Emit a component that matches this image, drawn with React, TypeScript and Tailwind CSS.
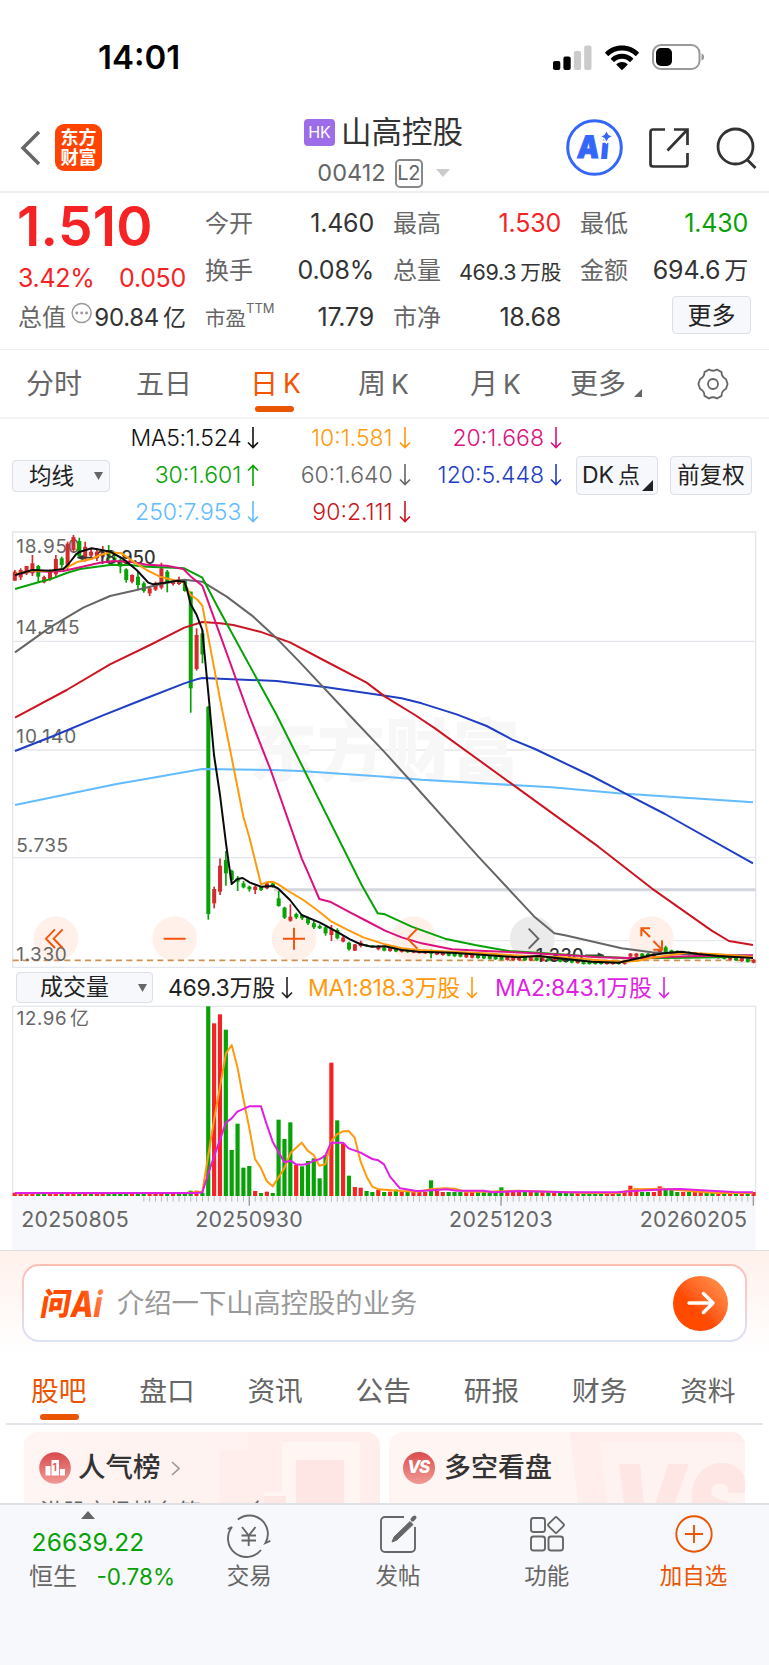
import React from 'react';

const RED = '#d22a2d';
const GREEN = '#06a206';

// chart space is 3 units per css pixel, one bar every STEP units
const X0 = 44;
const STEP = 17.59;

const barX = (i: number) => X0 + i * STEP;

type Candle = [string, number, number, number, number];

// colour, high, body top, body bottom, low
const candles: Candle[] = [
  ['r', 465, 470, 497, 497], ['r', 460, 465, 487, 495], ['r', 453, 453, 475, 480], ['r', 420, 445, 475, 483],
  ['g', 450, 453, 485, 502], ['r', 482, 486, 502, 505], ['r', 463, 470, 493, 497], ['r', 420, 432, 478, 488],
  ['g', 425, 430, 450, 460], ['r', 380, 386, 455, 465], ['r', 360, 366, 405, 412], ['g', 368, 378, 425, 430],
  ['r', 380, 395, 430, 440], ['r', 400, 410, 422, 432], ['r', 400, 410, 430, 438], ['r', 393, 410, 425, 430],
  ['g', 390, 405, 430, 440], ['g', 420, 428, 435, 445], ['g', 430, 435, 455, 475], ['g', 460, 463, 495, 503],
  ['r', 478, 480, 500, 505], ['g', 470, 485, 510, 525], ['g', 500, 505, 528, 533], ['r', 515, 520, 535, 543],
  ['r', 500, 505, 524, 528], ['r', 443, 460, 518, 523], ['g', 465, 470, 505, 532], ['r', 493, 497, 507, 512],
  ['r', 485, 493, 507, 510], ['g', 495, 497, 528, 530], ['g', 530, 530, 820, 893], ['r', 640, 660, 762, 767],
  ['g', 645, 655, 718, 745], ['g', 873, 875, 1497, 1514], ['r', 1415, 1422, 1465, 1480], ['r', 1330, 1352, 1430, 1440],
  ['g', 1308, 1335, 1375, 1412], ['g', 1364, 1368, 1395, 1400], ['g', 1383, 1390, 1400, 1428], ['g', 1398, 1405, 1417, 1420],
  ['g', 1412, 1415, 1423, 1430], ['r', 1412, 1415, 1425, 1437], ['g', 1415, 1415, 1425, 1428], ['r', 1403, 1405, 1420, 1423],
  ['g', 1403, 1405, 1415, 1418], ['g', 1428, 1450, 1473, 1475], ['g', 1475, 1478, 1508, 1512], ['r', 1468, 1505, 1517, 1520],
  ['g', 1493, 1497, 1507, 1512], ['g', 1498, 1500, 1510, 1515], ['g', 1505, 1510, 1525, 1530], ['g', 1518, 1525, 1537, 1542],
  ['g', 1528, 1533, 1540, 1542], ['g', 1533, 1537, 1555, 1562], ['r', 1530, 1542, 1560, 1578], ['g', 1540, 1545, 1570, 1573],
  ['r', 1560, 1568, 1580, 1582], ['g', 1580, 1583, 1603, 1607], ['r', 1587, 1588, 1607, 1608], ['r', 1577, 1583, 1593, 1597],
  ['g', 1588, 1590, 1594, 1596], ['g', 1590, 1591, 1595, 1597], ['r', 1590, 1593, 1603, 1606],
];

const lateColors = 'grgrgrrrgrrgggrrgggggrrrgrgrgrgggrggggrrgrrrggrrgggrgrrggrgrgrgr';

// closing level of the flat tail, sampled every 7 bars
const tailLevels = [1602, 1610, 1622, 1630, 1632, 1642, 1620, 1610, 1622, 1638];

lateColors.split('').forEach((c, k) => {
  const a = tailLevels[Math.floor(k / 7)];
  const b = tailLevels[Math.min(Math.floor(k / 7) + 1, 9)];
  let y = a + ((b - a) * (k % 7)) / 7;
  if (k >= 34 && k <= 41) y = 1642;
  if (k >= 42 && k <= 46) y = 1620;
  if (k === 47 || k === 48) y = 1608;
  if (k === 8) {
    candles.push([c, 1604, 1608, 1616, 1630]);
  } else if (k === 48) {
    candles.push([c, 1592, 1597, 1612, 1618]);
  } else {
    candles.push([c, y - 6, y - 4, y + 5, y + 7]);
  }
});

const priceLines = [
  { color: '#62bcff', points: '45,1170 350,1107 450,1090 607,1062 820,1065 900,1068 1155,1085 1265,1094 1655,1117 1855,1135 2259,1162' },
  { color: '#203ec4', points: '45,1008 160,963 307,902 425,855 553,805 590,793 607,789 830,798 980,817 1155,842 1205,850 1265,865 1370,898 1460,933 1535,973 1605,1002 1775,1083 1875,1135 1995,1197 2259,1345' },
  { color: '#cc1523', points: '45,908 200,825 330,748 450,690 553,638 607,621 660,625 700,630 780,650 870,682 970,735 1100,803 1155,845 1245,900 1305,940 1530,1103 1795,1295 1955,1420 2135,1547 2187,1578 2259,1590' },
  { color: '#666666', points: '45,712 150,637 250,578 330,543 400,527 450,515 500,503 553,494 607,500 680,545 760,605 825,665 900,742 1048,900 1155,1013 1205,1068 1435,1325 1605,1507 1663,1555 1695,1561 1865,1600 1955,1612 2055,1617 2259,1622' },
  { color: GREEN, points: '45,522 110,503 150,493 200,474 240,462 330,450 390,450 440,455 520,458 553,460 607,488 655,580 830,900 1085,1410 1133,1495 1155,1498 1235,1535 1335,1571 1425,1590 1525,1608 1635,1615 1755,1623 1895,1630 2055,1628 2259,1625' },
  { color: '#dd1080', points: '45,480 97,468 150,470 190,468 240,457 300,443 340,438 390,440 440,449 500,452 550,462 575,487 607,512 747,900 812,1065 905,1330 925,1375 958,1452 990,1460 1050,1492 1100,1518 1155,1547 1205,1567 1265,1585 1355,1603 1455,1608 1575,1613 1695,1620 1795,1627 1915,1630 2005,1625 2105,1623 2259,1621' },
  { color: '#ff9a0d', points: '45,477 97,468 150,468 190,462 235,440 275,432 300,420 330,412 365,415 400,440 440,465 480,485 520,495 553,502 572,540 590,552 607,572 662,862 730,1205 748,1267 783,1408 800,1402 818,1400 835,1408 865,1428 910,1455 955,1488 995,1520 1040,1543 1090,1567 1155,1588 1205,1600 1255,1605 1355,1610 1455,1615 1575,1623 1695,1627 1815,1637 1875,1640 1915,1637 1955,1628 2015,1620 2055,1613 2155,1618 2259,1625' },
  { color: '#0a0a0a', points: '45,480 97,465 150,467 190,462 203,450 215,435 228,418 240,410 275,400 300,404 330,410 370,432 410,465 445,503 460,508 490,504 530,497 553,500 560,520 572,568 590,600 607,645 614,720 627,855 642,1020 660,1140 678,1285 695,1407 712,1392 728,1389 750,1403 783,1415 820,1413 835,1421 870,1455 905,1500 960,1523 1010,1550 1050,1573 1080,1587 1115,1595 1155,1594 1205,1605 1255,1610 1355,1613 1455,1620 1555,1627 1615,1623 1705,1633 1775,1640 1855,1643 1915,1630 1955,1620 2005,1613 2045,1610 2095,1617 2155,1623 2259,1629' },
];

const earlyVolColors = 'rrrrggrrgrrgrgrrggggrggrrrgrgg';

const volumeBars: [string, number][] = [
  ...earlyVolColors.split('').map((c): [string, number] => [c, 593]),
  ['g', 587], ['r', 587], ['g', 593], ['g', 34], ['r', 85], ['r', 58], ['g', 104], ['g', 465], ['g', 386], ['g', 518],
  ['g', 513], ['r', 588], ['g', 594], ['r', 590], ['g', 594], ['g', 374], ['g', 432], ['g', 382], ['r', 510], ['g', 514],
  ['g', 498], ['g', 490], ['g', 550], ['g', 480], ['r', 203], ['g', 376], ['r', 445], ['g', 542], ['r', 576], ['r', 578],
  ['g', 588], ['g', 591], ['r', 585],
  ...lateColors.split('').map((c, k): [string, number] => {
    const peaks: Record<number, number> = { 1: 590, 2: 584, 8: 556, 9: 587, 20: 577, 41: 589, 42: 572, 43: 580, 47: 574, 48: 580, 49: 584 };
    return [c, peaks[k] ?? (k < 32 || k > 43 ? 591 : 593)];
  }),
];

const volumeLines = [
  { color: '#ff9a0d', points: '45,595 553,594 607,590 625,480 642,375 660,275 678,175 695,150 712,215 728,300 748,400 765,492 783,520 800,558 818,574 853,520 872,473 905,443 923,467 941,480 958,512 976,508 993,440 1011,418 1029,409 1046,408 1064,428 1082,500 1100,545 1117,575 1135,583 1205,588 1255,590 1295,582 1335,580 1365,581 1395,590 1455,590 1555,587 1655,590 1755,594 1855,594 1905,583 1985,581 2035,585 2095,590 2155,594 2259,594' },
  { color: '#e01fe4', points: '45,594 590,594 607,592 625,535 642,485 678,383 695,370 712,350 748,334 783,334 800,388 818,440 853,502 872,497 888,508 905,509 923,507 941,497 958,493 976,482 993,443 1029,443 1046,460 1082,473 1117,492 1135,496 1152,508 1170,545 1200,580 1250,588 1275,587 1340,583 1370,587 1450,587 1480,592 1560,588 1700,592 1850,592 1900,588 2000,583 2040,582 2130,587 2200,591 2259,592' },
];

const averages = [
  { text: 'MA5:1.524', color: 'text-[#111] tracking-[-0.3px]', up: false },
  { text: '10:1.581', color: 'text-[#ff9a0d]', up: false },
  { text: '20:1.668', color: 'text-[#dd1080]', up: false },
  { text: '30:1.601', color: 'text-[#06a206]', up: true },
  { text: '60:1.640', color: 'text-[#666]', up: false },
  { text: '120:5.448', color: 'text-[#203ec4]', up: false },
  { text: '250:7.953', color: 'text-[#62bcff]', up: false },
  { text: '90:2.111', color: 'text-[#cc1523]', up: false },
];

const Arrow = ({ up = false }: { up?: boolean }) => (
  <svg viewBox="0 0 12 22" className={`w-3 h-[22px] flex-shrink-0 ${up ? 'rotate-180' : ''}`} fill="none" stroke="currentColor" strokeWidth="1.6">
    <path d="M6 0v20.5M1 15.5l5 5 5-5" />
  </svg>
);

const StatusBar = () => (
  <div className="h-[98px] flex-shrink-0 flex items-start justify-between pl-[98px] pr-[64px] pt-[40px]">
    <span className="text-[33px] leading-[34px] font-semibold text-black">14:01</span>
    <div className="flex items-center gap-[14px] pt-1">
      <svg viewBox="0 0 39 25" className="w-[39px] h-[25px]">
        <rect x="0" y="16" width="7.3" height="9" rx="2" fill="#000" />
        <rect x="10.4" y="11.5" width="7.3" height="13.5" rx="2" fill="#000" />
        <rect x="20.8" y="6" width="7.3" height="19" rx="2" fill="#cbcbcb" />
        <rect x="31.2" y="0.5" width="7.3" height="24.5" rx="2" fill="#cbcbcb" />
      </svg>
      <svg viewBox="0 0 34 25" className="w-[34px] h-[25px] -ml-px mr-[-1px]">
        <path d="M17 0.6C10.4 0.6 4.4 3.2 0.3 7.3c-.3.3-.3.7 0 1l2.500 2.400c.3.3.7.3 1 0C7.200 7.400 11.900 5.500 17 5.500s9.800 1.900 13.200 5.200c.3.3.7.3 1 0l2.500-2.400c.3-.3.3-.7 0-1C29.600 3.200 23.600.6 17 .6z" />
        <path d="M17 8.800c-4.300 0-8.200 1.700-11 4.400-.3.3-.3.7 0 1l2.600 2.500c.3.3.6.3.9 0 2-1.800 4.600-3 7.500-3s5.500 1.200 7.500 3c.3.300.7.3 1 0l2.500-2.500c.3-.3.3-.7 0-1-2.900-2.700-6.700-4.400-11-4.400z" />
        <path d="M17 17c-2.100 0-4 .8-5.400 2.100-.3.3-.3.7 0 1l4.900 4.600c.3.300.7.3 1 0l4.900-4.600c.3-.3.3-.7 0-1C21 17.800 19.100 17 17 17z" />
      </svg>
      <svg viewBox="0 0 53 26" className="w-[53px] h-[26px]">
        <rect x="1" y="1" width="46.500" height="24" rx="8" fill="none" stroke="#9a9a9a" strokeWidth="2" />
        <rect x="4" y="4" width="16" height="18" rx="5" fill="#000" />
        <path d="M49.500 9.500c3.500.8 3.500 6.200 0 7z" fill="#9a9a9a" />
      </svg>
    </div>
  </div>
);

const Header = () => (
  <header className="h-[95px] flex-shrink-0 flex border-b-2 border-[#eeeeee]">
    <div className="w-[219px] flex items-center pl-5 gap-[14px] pt-[6px]">
      <svg viewBox="0 0 21 34" className="w-[21px] h-[34px]" fill="none" stroke="#666" strokeWidth="3.500">
        <path d="M19 1 3 17l16 16" />
      </svg>
      <div className="w-[47px] h-[47px] rounded-[9px] bg-[#ff4400] text-white flex flex-col items-center justify-center text-[18px] leading-[20px] font-bold">
        <span>东方</span>
        <span>财富</span>
      </div>
    </div>
    <div className="w-[329px] flex flex-col items-center">
      <div className="flex items-center gap-[6px] h-[44px] mt-[12px]">
        <span className="w-[31px] h-[27px] rounded-sm bg-[#9d6ce8] text-white text-[16px] flex items-center justify-center">HK</span>
        <span className="text-[30.500px] leading-[44px] text-[#333]">山高控股</span>
      </div>
      <div className="flex items-center h-[30px] mt-[4px] text-[#666]">
        <span className="text-[23.500px]">00412</span>
        <span className="ml-[9px] w-[28px] h-[29px] border-2 border-[#888] rounded-[5px] text-[20px] flex items-center justify-center tracking-tight">L2</span>
        <svg viewBox="0 0 14 8" className="ml-[13px] w-[14px] h-[8px]">
          <path d="M0 0h14L7 8z" fill="#ccc" />
        </svg>
      </div>
    </div>
    <div className="w-[221px] flex items-center pl-[18px] pt-[6px]">
      <svg viewBox="0 0 57 57" className="w-[57px] h-[57px]">
        <circle cx="28.500" cy="28.500" r="26.800" fill="none" stroke="#3566fb" strokeWidth="3" />
        <g fill="#3566fb" fontSize="31" fontWeight="900" transform="translate(3.500 0) skewX(-5)">
          <text x="10.500" y="39" textLength="22" lengthAdjust="spacingAndGlyphs" stroke="#3566fb" strokeWidth="1">A</text>
          <text x="33.500" y="40.500" fontSize="30">i</text>
        </g>
        <path d="M40.500 11l2.300 4.200 4.200 2.300-4.200 2.300-2.300 4.200-2.300-4.200-4.200-2.300 4.200-2.300z" fill="#3566fb" stroke="#fff" strokeWidth="1.500" />
      </svg>
      <svg viewBox="0 0 40 40" className="ml-[26px] w-[40px] h-[40px]" fill="none" stroke="#333" strokeWidth="2.700">
        <path d="M16 1.500H4A2.500 2.500 0 0 0 1.500 4v32A2.500 2.500 0 0 0 4 38.500h32a2.500 2.500 0 0 0 2.500-2.500V25" />
        <path d="M25 1.500h13.500V17M38 2 18.500 22.500" />
      </svg>
      <svg viewBox="0 0 42 42" className="ml-[27px] w-[42px] h-[42px]" fill="none" stroke="#333" strokeWidth="2.800">
        <circle cx="19.500" cy="19.500" r="17.500" />
        <path d="M31 32.500l8.500 8.500" />
      </svg>
    </div>
  </header>
);

const Stat = ({ label, value, unit, color = 'text-[#333]', size = 'text-[25px] tracking-[-0.2px]' }: { label: React.ReactNode; value: string; unit?: string; color?: string; size?: string }) => (
  <div className="h-[47px] flex items-center justify-between whitespace-nowrap">
    <span className="text-[24px] text-[#666] -ml-px">{label}</span>
    <span className={`${size} ${color}`}>
      {value}
      {unit && <span className="ml-[4px] text-[0.960em]">{unit}</span>}
    </span>
  </div>
);

const Quote = () => (
  <section className="h-[157px] flex-shrink-0 grid grid-cols-[167px_168px_167px_170px] gap-x-5 pl-[19px] border-b border-[#eeeeee]">
    <div>
      <div className="h-[60px] pt-[6px] text-[55px] leading-[54px] font-semibold text-[#f52323] tracking-[0.3px] ml-[-2px]">1.510</div>
      <div className="h-[46px] flex items-center justify-between text-[25px] text-[#f52323] tracking-[-0.3px] pt-[5px] ml-[-1px]">
        <span>3.42%</span>
        <span>0.050</span>
      </div>
      <div className="h-[38px] flex items-center whitespace-nowrap ml-[-1px]">
        <span className="text-[24px] text-[#666]">总值</span>
        <svg viewBox="0 0 22 22" className="w-[22px] h-[22px] ml-[5px] mb-[11px]">
          <circle cx="11" cy="11" r="9.800" fill="none" stroke="#999" strokeWidth="1.500" />
          <g fill="#999">
            <circle cx="6" cy="11" r="1.500" />
            <circle cx="11" cy="11" r="1.500" />
            <circle cx="16" cy="11" r="1.500" />
          </g>
        </svg>
        <span className="text-[24px] text-[#333] tracking-[-0.3px] ml-[2px]">90.84</span>
        <span className="text-[23px] text-[#333] ml-1">亿</span>
      </div>
    </div>
    <div className="pt-[7px]">
      <Stat label="今开" value="1.460" />
      <Stat label="换手" value="0.08%" />
      <Stat
        label={
          <span className="flex items-start text-[20.500px] pt-1">
            市盈<sup className="text-[13px] leading-[13px] top-0 -mt-[2px]">TTM</sup>
          </span>
        }
        value="17.79"
      />
    </div>
    <div className="pt-[7px]">
      <Stat label="最高" value="1.530" color="text-[#f52323]" />
      <Stat label="总量" value="469.3" unit="万股" size="text-[21.500px] tracking-[-0.3px] pt-[3px]" />
      <Stat label="市净" value="18.68" />
    </div>
    <div className="pt-[7px]">
      <div className="pr-[3px]">
        <Stat label="最低" value="1.430" color="text-[#06a206]" />
        <Stat label="金额" value="694.6" unit="万" />
      </div>
      <div className="h-[47px] flex items-center justify-end">
        <button className="w-[79px] h-[38px] mt-[-6px] rounded-[4px] border border-[#dcdfe6] bg-[#f7f8fb] text-[24px] leading-none text-[#222] pt-[2px]">更多</button>
      </div>
    </div>
  </section>
);

const Periods = () => (
  <nav className="h-[69px] flex-shrink-0 flex items-center border-b-2 border-[#f3f3f5] text-[28px] text-[#666] pl-[26px] whitespace-nowrap">
    <span className="w-[110px]">分时</span>
    <span className="w-[114px]">五日</span>
    <span className="w-[108px] h-full flex items-center relative text-[#f25500]">
      日<span className="ml-[5px] text-[26.500px]">K</span>
      <span className="absolute left-[5px] bottom-[5px] w-[39px] h-[6px] rounded-full bg-[#ea5504]" />
    </span>
    <span className="w-[112px]">周<span className="ml-[5px] text-[26.500px]">K</span></span>
    <span className="w-[100px]">月<span className="ml-[5px] text-[26.500px]">K</span></span>
    <span className="w-[127px] flex items-center">
      更多
      <svg viewBox="0 0 8 8" className="w-[8px] h-[8px] ml-[8px] mt-[18px]">
        <path d="M8 0v8H0z" fill="#666" />
      </svg>
    </span>
    <svg viewBox="0 0 32 32" className="w-[32px] h-[32px]" fill="none" stroke="#666" strokeWidth="1.800" strokeLinejoin="round">
      <circle cx="16" cy="16" r="5" />
      <path d="M12 1.500q4 2.500 8 0l4.500 2.600q0 4.900 4.500 7.200l1.600 4.700-1.600 4.700q-4.500 2.300-4.500 7.200L20 30.500q-4-2.500-8 0l-4.500-2.600q0-4.900-4.500-7.200L1.400 16 3 11.300q4.500-2.300 4.500-7.200z" />
    </svg>
  </nav>
);

const Averages = () => (
  <div className="h-[111px] flex-shrink-0 flex items-start pl-3 pt-[1px] text-[#222]">
    <button className="w-[98px] h-[32px] mt-[40px] flex items-center rounded-[4px] border border-[#dcdfe6] bg-[#f7f8fb] pl-[16px] text-[22.500px] leading-none">
      均线
      <svg viewBox="0 0 9 8" className="w-[9px] h-[8px] ml-[20px]">
        <path d="M0 0h9L4.500 8z" fill="#666" />
      </svg>
    </button>
    <div className="w-[454px] -ml-[2px] mr-[2px] grid grid-cols-3 text-[23px]">
      {averages.map((item) => (
        <span key={item.text} className={`h-[36.800px] flex items-center justify-end gap-[6px] whitespace-nowrap font-light ${item.color}`}>
          {item.text}
          <Arrow up={item.up} />
        </span>
      ))}
    </div>
    <button className="relative ml-3 w-[82px] h-[39px] mt-[36px] rounded-[4px] border border-[#dcdfe6] bg-[#f7f8fb] pl-[5px] text-left text-[23px] leading-none whitespace-nowrap">
      DK<span className="ml-1 text-[22px]">点</span>
      <svg viewBox="0 0 11 11" className="absolute right-[4px] bottom-[3px] w-[11px] h-[11px]">
        <path d="M11 0v11H0z" fill="#222" />
      </svg>
    </button>
    <button className="ml-3 w-[82px] h-[39px] mt-[36px] rounded-[4px] border border-[#dcdfe6] bg-[#f7f8fb] text-[22.500px] leading-none whitespace-nowrap">前复权</button>
  </div>
);

const PriceChart = () => (
  <svg viewBox="0 345 2307 1320" className="w-[769px] h-[440px] flex-shrink-0 block">
    <g stroke="#e3e6ea" strokeWidth="4" fill="none">
      <path d="M38 351H2267V1657H38z" />
      <path d="M38 679H2267M38 1005H2267M38 1328H2267" />
      <path d="M1000 1577H2267M2200 1642H2267" strokeWidth="3" />
    </g>
    <text x="748" y="1082" fontSize="203" fontWeight="900" fill="#f7f7f7" textLength="812">东方财富</text>
    <path d="M822 1424H2267" stroke="#d3d6dd" strokeWidth="9" />
    {[168, 524, 882, 1241, 1954].map((cx) => (
      <circle key={cx} cx={cx} cy="1571" r="67" fill="#fff0ea" />
    ))}
    <circle cx="1597" cy="1571" r="67" fill="#ebebec" />
    <path d="M38 1636H2259" stroke="#cf9150" strokeWidth="5" strokeDasharray="18 13" />
    <g fontSize="57" fill="#666">
      <text x="49" y="413" textLength="190">18.950</text>
      <text x="49" y="657" textLength="190">14.545</text>
      <text x="49" y="985" textLength="180">10.140</text>
      <text x="49" y="1312" textLength="155">5.735</text>
      <text x="49" y="1637" textLength="151">1.330</text>
    </g>
    {candles.map(([c, high, top, bottom, low], i) => (
      <g key={i} fill={c === 'r' ? RED : GREEN}>
        <rect x={barX(i) - 2} y={high} width="5" height={low - high} />
        <rect x={barX(i) - 5.5} y={top} width="12" height={bottom - top} />
      </g>
    ))}
    <g fontSize="54" fill="#333" fontWeight="500">
      <text x="292" y="447" textLength="175">18.950</text>
      <text x="1607" y="1640" textLength="144">1.330</text>
    </g>
    <g stroke="#333" strokeWidth="5" fill="#333">
      <path d="M240 428H283" />
      <path d="M232 428l18-7v14z" strokeWidth="2" />
      <path d="M1755 1621H1798" />
      <path d="M1812 1621l-18-7v14z" strokeWidth="2" />
    </g>
    <g fill="none" strokeWidth="6" strokeLinejoin="round">
      {priceLines.map((line) => (
        <polyline key={line.color} points={line.points} stroke={line.color} />
      ))}
    </g>
    <g fill="none" stroke="#f4560c" strokeWidth="6">
      <path d="M165 1543l-27 28 27 28M188 1543l-27 28 27 28" />
      <path d="M491 1571h66M849 1571h66M882 1538v66" />
      <path d="M1252 1541l-29 30 29 30" />
      <path d="M1586 1541l29 30-29 30" stroke="#666" />
      <path d="M1924 1564v-24h26M1924 1540l26 26M1960 1578l26 26M1986 1576v28h-26" />
    </g>
  </svg>
);

const VolumeHeader = () => (
  <div className="h-[35px] flex-shrink-0 flex items-center text-[23px] whitespace-nowrap pl-4">
    <button className="w-[137px] h-[31px] flex items-center justify-between rounded-[4px] border border-[#dcdfe6] bg-[#f7f8fb] pl-[23px] pr-[5px] leading-none text-[#222]">
      成交量
      <svg viewBox="0 0 9 8" className="w-[9px] h-[8px]">
        <path d="M0 0h9L4.500 8z" fill="#666" />
      </svg>
    </button>
    <span className="w-[140px] ml-[15px] pt-[1px] flex items-center gap-[6px] text-[#222] tracking-[-0.3px]">469.3万股<Arrow /></span>
    <span className="w-[187px] pt-[1px] flex items-center gap-[6px] text-[#ff9a0d] tracking-[-0.3px]">MA1:818.3万股<Arrow /></span>
    <span className="pt-[1px] flex items-center gap-[6px] text-[#e01fe4] tracking-[-0.3px]">MA2:843.1万股<Arrow /></span>
  </div>
);

const VolumeChart = () => (
  <svg viewBox="0 30 2307 735" className="w-[769px] h-[245px] flex-shrink-0 block">
    <rect x="36" y="603" width="2231" height="170" fill="#f7f8fb" />
    <path d="M38 603V34H2267V603" fill="none" stroke="#e3e6ea" strokeWidth="4" />
    <text x="50" y="91" fontSize="56" fill="#666" textLength="150">12.96</text>
    <text x="210" y="91" fontSize="57" fill="#666">亿</text>
    {volumeBars.map(([c, top], i) => (
      <g key={i}>
        <rect x={barX(i) - 6} y={top} width="12.500" height={603 - top} fill={c === 'r' ? '#f52323' : GREEN} />
        {i >= 22 && <rect x={barX(i) - 1} y="604" width="3" height="16" fill="#b8b9bc" />}
      </g>
    ))}
    <path d="M748 604v28M1503 604v28M2260 604v28" stroke="#999" strokeWidth="4" />
    <g fill="none" strokeWidth="6" strokeLinejoin="round">
      {volumeLines.map((line) => (
        <polyline key={line.color} points={line.points} stroke={line.color} />
      ))}
    </g>
    <g fontSize="64" fill="#666">
      <text x="64" y="695" textLength="322">20250805</text>
      <text x="586" y="695" textLength="322">20250930</text>
      <text x="1347" y="695" textLength="311">20251203</text>
      <text x="1919" y="695" textLength="322">20260205</text>
    </g>
  </svg>
);

const AskAi = () => (
  <section className="h-[105px] flex-shrink-0 border-t border-[#dedee2] bg-gradient-to-b from-[#fff1ec] to-white px-[22px] pt-[13px]">
    <div className="h-[78px] rounded-[17px] bg-gradient-to-b from-[#ffbdb2] to-[#dbe2f8] p-[2px]">
      <div className="h-full rounded-[15px] bg-white flex items-center pl-[15px] pr-[17px]">
        <svg viewBox="0 0 64 32" className="w-[64px] h-[32px] overflow-visible">
          <defs>
            <linearGradient id="ask" gradientUnits="userSpaceOnUse" x1="0" y1="32" x2="66" y2="0">
              <stop offset="0.6" stopColor="#ff4b00" />
              <stop offset="1" stopColor="#ffa07a" />
            </linearGradient>
          </defs>
          <g fill="url(#ask)" fontWeight="900" transform="translate(5 0) skewX(-10)">
            <text x="0" y="27.500" fontSize="31" textLength="30" lengthAdjust="spacingAndGlyphs">问</text>
            <text x="30.500" y="29.500" fontSize="36" fontWeight="800" textLength="31" lengthAdjust="spacingAndGlyphs">Ai</text>
          </g>
        </svg>
        <span className="ml-[14px] pt-[2px] text-[27.300px] text-[#999]">介绍一下山高控股的业务</span>
        <span className="ml-auto w-[55px] h-[55px] rounded-full bg-gradient-to-tr from-[#ff4a00] from-40% to-[#ff9a50] flex items-center justify-center">
          <svg viewBox="0 0 28 24" className="w-[28px] h-[24px]" fill="none" stroke="#fff" strokeWidth="3.400" strokeLinecap="round" strokeLinejoin="round">
            <path d="M2 12h23M16.500 2.500 26 12l-9.500 9.500" />
          </svg>
        </span>
      </div>
    </div>
  </section>
);

const tabs = ['股吧', '盘口', '资讯', '公告', '研报', '财务', '资料'];

const Tabs = () => (
  <nav className="h-[70px] flex-shrink-0 mx-[6px] pl-[25px] flex border-b-2 border-[#e4e4ea] text-[27.700px] text-[#666]">
    {tabs.map((tab, index) => (
      <span key={tab} className={`relative w-[108.200px] flex-shrink-0 pt-[16px] ${index === 0 ? 'text-[#ea5504]' : ''}`}>
        {tab}
        {index === 0 && <span className="absolute left-[9px] bottom-[3px] w-[39px] h-[6px] rounded-full bg-[#ea5504]" />}
      </span>
    ))}
  </nav>
);

const Cards = () => (
  <section className="h-[78px] flex-shrink-0 overflow-hidden flex gap-[9px] pl-6 pt-[7px]">
    <div className="relative w-[356px] h-[160px] flex-shrink-0 rounded-[14px] bg-gradient-to-r from-[#fff5f3] to-[#fff0ee] overflow-hidden">
      <svg viewBox="0 0 160 160" className="absolute right-0 top-0 w-[160px] h-[160px]">
        <path d="M0 18h28v-18h132v160H0z" fill="#ffeeeb" />
        <path d="M62 10h78v150h-96V60h18z" fill="#fff5f3" />
        <path d="M76 28h48v132H76z" fill="#fde6e3" />
        <path d="M44 64h22v96H44z" fill="#fde6e3" />
      </svg>
      <div className="relative flex items-center pl-[15px] pt-[16px] h-[56px]">
        <svg viewBox="0 0 32 32" className="w-[32px] h-[32px]">
          <defs>
            <linearGradient id="badge" x1="0" y1="0" x2="0" y2="1">
              <stop offset="0" stopColor="#d94a4c" />
              <stop offset="1" stopColor="#f19a96" />
            </linearGradient>
          </defs>
          <circle cx="16" cy="16" r="15.800" fill="url(#badge)" />
          <path d="M6.500 14h5v9.500h-5zM12.500 8h7.500v15.500h-7.500zM21 17h5v6.500h-5z" fill="#fff" />
          <text x="13.400" y="19" fontSize="10" fontWeight="700" fill="#e0605f">1</text>
        </svg>
        <span className="ml-[7px] text-[27.500px] font-medium text-[#333]">人气榜</span>
        <svg viewBox="0 0 9 15" className="ml-[10px] w-[9px] h-[15px]" fill="none" stroke="#999" strokeWidth="1.600">
          <path d="M1 1l7 6.500L1 14" />
        </svg>
      </div>
      <div className="relative pl-4 pt-[8px] text-[23px] leading-[33px] text-[#666] whitespace-nowrap">
        港股市场排名第<span className="text-[#f0442c] text-[22px] mx-[5px]">100</span>名
      </div>
    </div>
    <div className="relative w-[356px] h-[160px] flex-shrink-0 rounded-[14px] bg-[#fff5f3] overflow-hidden">
      <svg viewBox="0 0 175 160" className="absolute right-0 top-0 w-[175px] h-[160px]">
        <path d="M0 0h175v160H18z" fill="#ffeeeb" />
        <path d="M30 10h145v150H48z" fill="#fff3f1" />
        <text x="40" y="124" fontSize="126" fontWeight="900" fontStyle="italic" fill="#fde6e3" textLength="136" lengthAdjust="spacingAndGlyphs">VS</text>
      </svg>
      <div className="relative flex items-center pl-[14px] pt-[16px] h-[56px]">
        <span className="w-[32px] h-[32px] rounded-full bg-gradient-to-b from-[#d94a4c] to-[#f19a96] text-white text-[17px] font-extrabold italic flex items-center justify-center tracking-[-1.500px] pr-[2px]">VS</span>
        <span className="ml-[9px] text-[27px] font-medium text-[#333]">多空看盘</span>
      </div>
    </div>
  </section>
);

const actions = [
  {
    label: '交易',
    icon: (
      <>
        <path d="M10.800 4.500A18.500 18.500 0 0 1 38.500 28l4.800-2.200" />
        <path d="M34 35A18.500 18.500 0 0 1 5 12L.7 14" />
        <path d="M15 12l6.700 8.500L28.500 12M21.700 20.500V31M14.500 20.500h14.500M14.500 25.500h14.500" />
      </>
    ),
  },
  {
    label: '发帖',
    icon: (
      <>
        <path d="M28 2H9a4 4 0 0 0-4 4v27a4 4 0 0 0 4 4h26a4 4 0 0 0 4-4V12" />
        <path d="M34 6.500 37 9.500 21 25l-5 2 2-5z" fill="currentColor" strokeWidth="1" />
        <path d="M36.500 4.500l2-2" strokeWidth="4" strokeLinecap="round" />
      </>
    ),
  },
  {
    label: '功能',
    icon: (
      <>
        <rect x="6" y="3" width="14" height="14" rx="2.500" />
        <rect x="6" y="21.500" width="14" height="14" rx="2.500" />
        <rect x="23.500" y="21.500" width="14.500" height="14" rx="2.500" />
        <rect x="25" y="4" width="12" height="12" rx="1.500" transform="rotate(45 31 10)" />
      </>
    ),
  },
];

const BottomBar = () => (
  <footer className="h-[162px] flex-shrink-0 flex bg-[#f7f8fb] border-t-2 border-[#e0e1e4] text-[22.500px] text-[#666]">
    <div className="w-[176px] flex-shrink-0 pt-[6px] flex flex-col items-center">
      <svg viewBox="0 0 14 8" className="w-[14px] h-[8px]">
        <path d="M7 0l7 8H0z" fill="#666" />
      </svg>
      <span className="text-[24.500px] leading-[32px] mt-[7px] text-[#06a206] tracking-[0.1px]">26639.22</span>
      <div className="w-full flex items-center justify-between pl-[29px] pr-[1px] h-[37px]">
        <span className="text-[24px]">恒生</span>
        <span className="text-[22.500px] text-[#06a206]">-0.78%</span>
      </div>
    </div>
    {actions.map((action) => (
      <div key={action.label} className="w-[148.700px] flex-shrink-0 flex flex-col items-center pt-[10px] -ml-[1px] mr-[1px]">
        <svg viewBox="0 0 44 38" className="w-[44px] h-[38px] overflow-visible" fill="none" stroke="currentColor" strokeWidth="1.900">
          {action.icon}
        </svg>
        <span className="leading-[34px] mt-[6px]">{action.label}</span>
      </div>
    ))}
    <div className="w-[143px] flex-shrink-0 flex flex-col items-center pt-[10px] text-[#ea5504]">
      <svg viewBox="0 0 38 38" className="w-[38px] h-[38px]" fill="none" stroke="currentColor" strokeWidth="1.900">
        <circle cx="19" cy="19" r="17.700" />
        <path d="M10 19h18M19 10v18" />
      </svg>
      <span className="leading-[34px] mt-[6px]">加自选</span>
    </div>
  </footer>
);

const App = () => {
  return (
    <div className="w-[769px] h-[1665px] overflow-hidden flex flex-col bg-white font-['Inter','Noto_Sans_CJK_SC',sans-serif]">
      <StatusBar />
      <Header />
      <Quote />
      <Periods />
      <Averages />
      <PriceChart />
      <VolumeHeader />
      <VolumeChart />
      <AskAi />
      <Tabs />
      <Cards />
      <BottomBar />
    </div>
  );
};

export default App;
